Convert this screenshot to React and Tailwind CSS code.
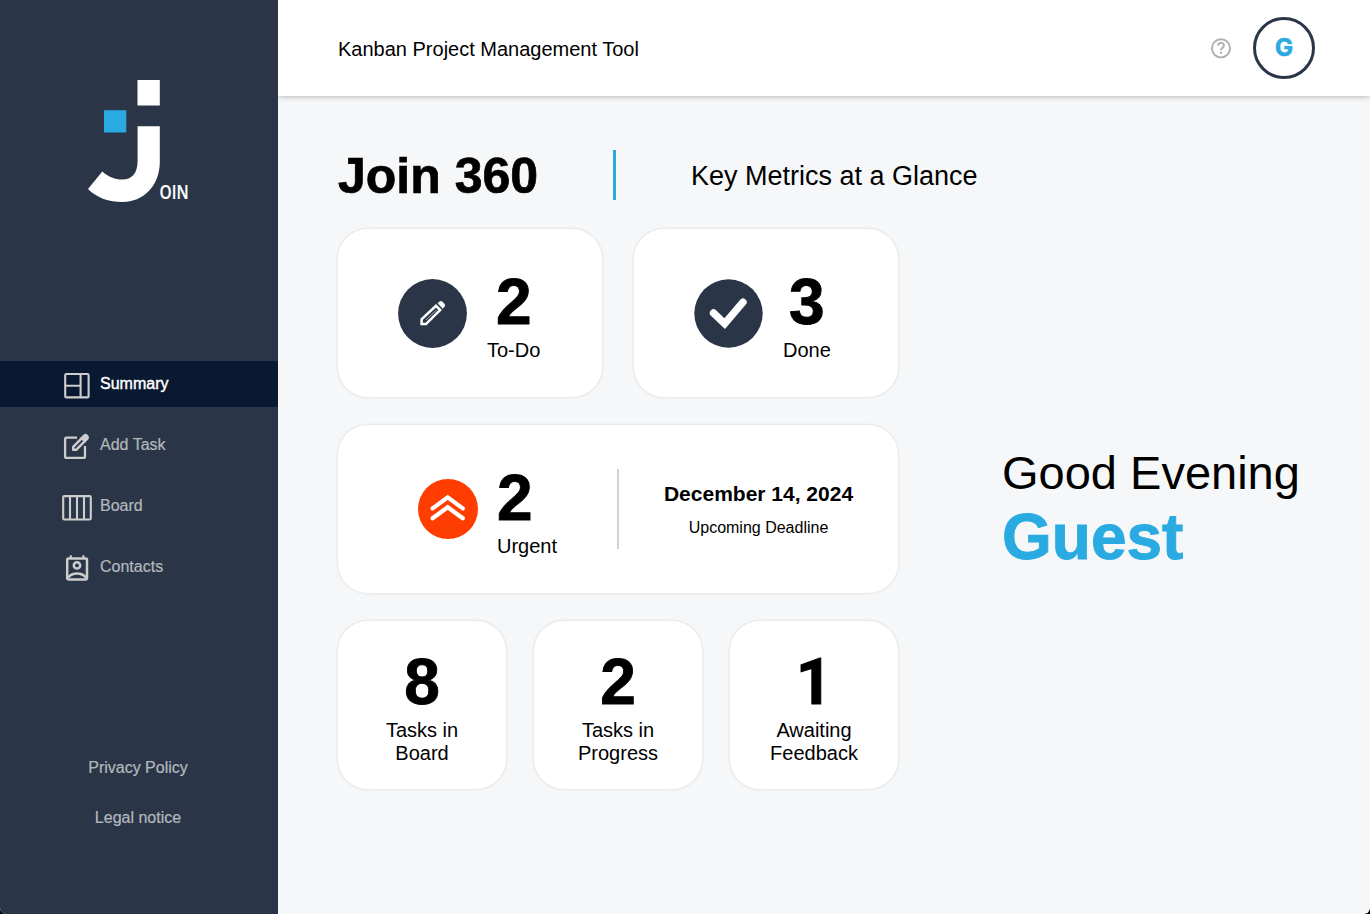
import React from "react";

function Logo() {
  return (
    <svg width="112" height="128" viewBox="0 0 112 128" fill="none">
      <rect x="49.5" y="0" width="22.3" height="25.5" fill="#fff" />
      <rect x="16" y="30.2" width="22.3" height="22.3" fill="#29abe2" />
      <path d="M49.6 46.2H71.8V82C71.8 106 55 122 34.5 122C21 122 9 118 0 109L14.3 91.6C20.5 97 27 99.6 34.5 99.6C43.5 99.6 49.6 93.5 49.6 81Z" fill="#fff" />
      <text x="71.6" y="118.7" fill="#fff" fontSize="19.6" fontWeight="600" fontFamily="Open Sans, sans-serif" textLength="29" lengthAdjust="spacingAndGlyphs" stroke="#fff" strokeWidth="0.2">OIN</text>
    </svg>
  );
}

function SummaryIcon() {
  return (
    <svg width="30" height="30" viewBox="0 0 30 30" fill="none" stroke="#cdcdcd" strokeWidth="2.1">
      <rect x="3.2" y="3" width="23.4" height="23.4" rx="1.2" />
      <path d="M18.6 3V26.4M3 14.8H18.6" />
    </svg>
  );
}

function AddTaskIcon() {
  return (
    <svg width="30" height="30" viewBox="0 0 30 30" fill="none">
      <path d="M15 5.6H4.5Q3.1 5.6 3.1 7V24.4Q3.1 25.8 4.5 25.8H21.6Q23 25.8 23 24.4V14" stroke="#cdcdcd" strokeWidth="2.3" />
      <path d="M11.2 14.8L19.8 6.2L22.8 9.2L14.2 17.8H11.2Z" stroke="#cdcdcd" strokeWidth="2.5" strokeLinejoin="round" />
      <path d="M18.4 5.7L21.4 2.8Q23.4 1 25.4 2.7L26.2 3.5Q28 5.4 26.2 7.4L23.3 10.4Z" fill="#cdcdcd" />
    </svg>
  );
}

function BoardIcon() {
  return (
    <svg width="30" height="30" viewBox="0 0 30 30" fill="none" stroke="#cdcdcd" strokeWidth="2.1">
      <rect x="1.2" y="3.1" width="27.6" height="23.4" rx="1.2" />
      <path d="M8 3.1V26.5M15 3.1V26.5M22 3.1V26.5" />
    </svg>
  );
}

function ContactsIcon() {
  return (
    <svg width="30" height="30" viewBox="0 0 30 30" fill="none" stroke="#cdcdcd" strokeWidth="2.5">
      <rect x="5.2" y="4.4" width="19.8" height="21" rx="1.2" />
      <path d="M8.8 1.2V4.4M21.4 1.2V4.4" strokeWidth="2.2" />
      <circle cx="15" cy="11.4" r="3.2" />
      <path d="M6 23.6C8.5 20.6 11.5 19.6 15 19.6C18.5 19.6 21.5 20.6 24 23.6" />
    </svg>
  );
}

function NavItem({ icon, label, active }) {
  return (
    <a className={active ? "flex h-[46px] items-center bg-[#091931] pl-[62px] text-white" : "flex h-[46px] items-center pl-[62px] text-[#b4b8be]"}>
      <span className="mt-[3px]">{icon}</span>
      <span className={active ? "ml-2 text-base leading-5 [-webkit-text-stroke:0.4px_white]" : "ml-2 text-base leading-5 [-webkit-text-stroke:0.2px_#b4b8be]"}>{label}</span>
    </a>
  );
}

function PencilBadge() {
  return (
    <svg width="69" height="69" viewBox="0 0 69 69">
      <circle cx="34.5" cy="34.5" r="34.4" fill="#2a3647" />
      <path d="M23.6 45.1V40.4L38 26.8L42.2 31L28 45.1Z" fill="none" stroke="#fff" strokeWidth="2.5" />
      <path d="M28 41L38.4 31" stroke="#fff" strokeWidth="0.6" />
      <path d="M39.6 24.3L41.3 22.7Q42.7 21.4 44.2 22.6L46.2 24.6Q47.6 26.1 46.7 27.6L44.8 29.8Z" fill="#fff" />
    </svg>
  );
}

function CheckBadge() {
  return (
    <svg width="69" height="69" viewBox="0 0 69 69" fill="none">
      <circle cx="34.5" cy="34.5" r="34.2" fill="#2a3647" />
      <path d="M19.5 34L30.7 44.6L49 23.2" stroke="#fff" strokeWidth="7.4" strokeLinecap="round" />
    </svg>
  );
}

function UrgentBadge() {
  return (
    <svg width="60" height="60" viewBox="0 0 60 60" fill="none">
      <circle cx="30" cy="30" r="30" fill="#ff3d00" />
      <path d="M14.6 29.4L29.7 18.3L44.8 29.4M14.6 39.3L29.7 28.2L44.8 39.3" stroke="#fff" strokeWidth="4.2" strokeLinecap="round" />
    </svg>
  );
}

const card = "rounded-[30px] bg-white shadow-[0_0_3px_rgba(0,0,0,0.14)]";
const digit = "text-[64px] font-bold [-webkit-text-stroke:0.9px_black]";

function Metric({ value, label }) {
  return (
    <div className="flex flex-col items-center">
      <span className={`${digit} leading-[74px]`}>{value}</span>
      <span className="text-[20px] leading-[23px]">{label}</span>
    </div>
  );
}

function SmallCard({ value, label, digitFont = "" }) {
  return (
    <div className={`${card} flex h-[168px] w-[168px] flex-col items-center pt-[25px] text-center`}>
      <span className={`${digit} ${digitFont} leading-[73px]`}>{value}</span>
      <span className="w-24 text-[20px] leading-[23px]">{label}</span>
    </div>
  );
}

export default function App() {
  return (
    <div className="h-[914px] w-[1370px] bg-black">
      <div className="flex h-full overflow-hidden rounded-b-[6px] bg-[#f6f7f8] font-['Liberation_Sans',Arial,sans-serif] text-black">
        <aside className="relative z-10 flex w-[278px] shrink-0 flex-col bg-[#2a3647]">
          <div className="flex h-[361px] pl-[88px] pt-20">
            <Logo />
          </div>
          <nav className="flex flex-col gap-[15px]">
            <NavItem active icon={<SummaryIcon />} label="Summary" />
            <NavItem icon={<AddTaskIcon />} label="Add Task" />
            <NavItem icon={<BoardIcon />} label="Board" />
            <NavItem icon={<ContactsIcon />} label="Contacts" />
          </nav>
          <div className="mt-[168px] flex flex-col items-center gap-[30px] pr-0.5 text-base leading-5 text-[#b4b8be] [-webkit-text-stroke:0.2px_#b4b8be]">
            <a>Privacy Policy</a>
            <a>Legal notice</a>
          </div>
        </aside>

        <div className="flex grow flex-col">
          <header className="flex h-24 shrink-0 items-center bg-white pl-[60px] pr-[55px] shadow-[0_0_6px_rgba(0,0,0,0.35)]">
            <h1 className="grow pt-0.5 text-[20px]">Kanban Project Management Tool</h1>
            <svg className="mr-[21px]" width="22" height="22" viewBox="0 0 22 22" fill="none" stroke="#b0b0b0" strokeWidth="1.9">
              <circle cx="11" cy="11.3" r="9.1" />
              <path d="M8 8.6C8.1 6.8 9.3 5.9 11 5.9C12.8 5.9 13.9 7 13.9 8.5C13.9 10.6 11 10.8 11 13.2" />
              <path d="M11 14.7V16.8" strokeWidth="2.1" />
            </svg>
            <div className="flex size-[62px] items-center justify-center rounded-full border-[3px] border-[#2a3647] font-['Inter',sans-serif] text-[24px] font-bold text-[#29abe2] [-webkit-text-stroke:0.7px_#29abe2]">
              G
            </div>
          </header>

          <main className="flex flex-col pl-[60px] pt-[54px]">
            <div className="flex h-[50px] items-center">
              <h2 className="w-[275px] whitespace-nowrap pt-0.5 text-[50px] font-bold leading-[50px] [-webkit-text-stroke:0.7px_black]">Join 360</h2>
              <div className="h-[50px] w-[3px] bg-[#29abe2]" />
              <p className="ml-[75px] pt-0.5 text-[27px]">Key Metrics at a Glance</p>
            </div>

            <div className="mt-[29px] flex">
              <section className="flex w-[560px] flex-col gap-7">
                <div className="flex justify-between">
                  <div className={`${card} flex h-[168px] w-[264px] items-center gap-5 pl-[60px]`}>
                    <PencilBadge />
                    <Metric value="2" label="To-Do" />
                  </div>
                  <div className={`${card} flex h-[168px] w-[264px] items-center gap-5 pl-[60px]`}>
                    <CheckBadge />
                    <Metric value="3" label="Done" />
                  </div>
                </div>
                <div className={`${card} flex h-[168px] items-center pl-20`}>
                  <UrgentBadge />
                  <div className="ml-[19px] flex w-[120px] flex-col">
                    <span className={`${digit} leading-[74px]`}>2</span>
                    <span className="text-[20px] leading-[23px]">Urgent</span>
                  </div>
                  <div className="h-20 w-0.5 bg-[#d1d1d1]" />
                  <div className="flex w-[279px] flex-col items-center pt-0.5">
                    <span className="text-[21px] font-bold leading-6">December 14, 2024</span>
                    <span className="mt-3 text-base leading-5">Upcoming Deadline</span>
                  </div>
                </div>
                <div className="flex justify-between">
                  <SmallCard value="8" label="Tasks in Board" />
                  <SmallCard value="2" label="Tasks in Progress" />
                  <SmallCard value="1" label="Awaiting Feedback" digitFont="font-['Roboto',sans-serif]" />
                </div>
              </section>
              <section className="ml-[104px] flex flex-col pt-[216px]">
                <span className="whitespace-nowrap text-[47px] leading-[56px]">Good Evening</span>
                <span className="text-[64px] font-bold leading-[72px] text-[#29abe2] [-webkit-text-stroke:0.9px_#29abe2]">Guest</span>
              </section>
            </div>
          </main>
        </div>
      </div>
    </div>
  );
}
